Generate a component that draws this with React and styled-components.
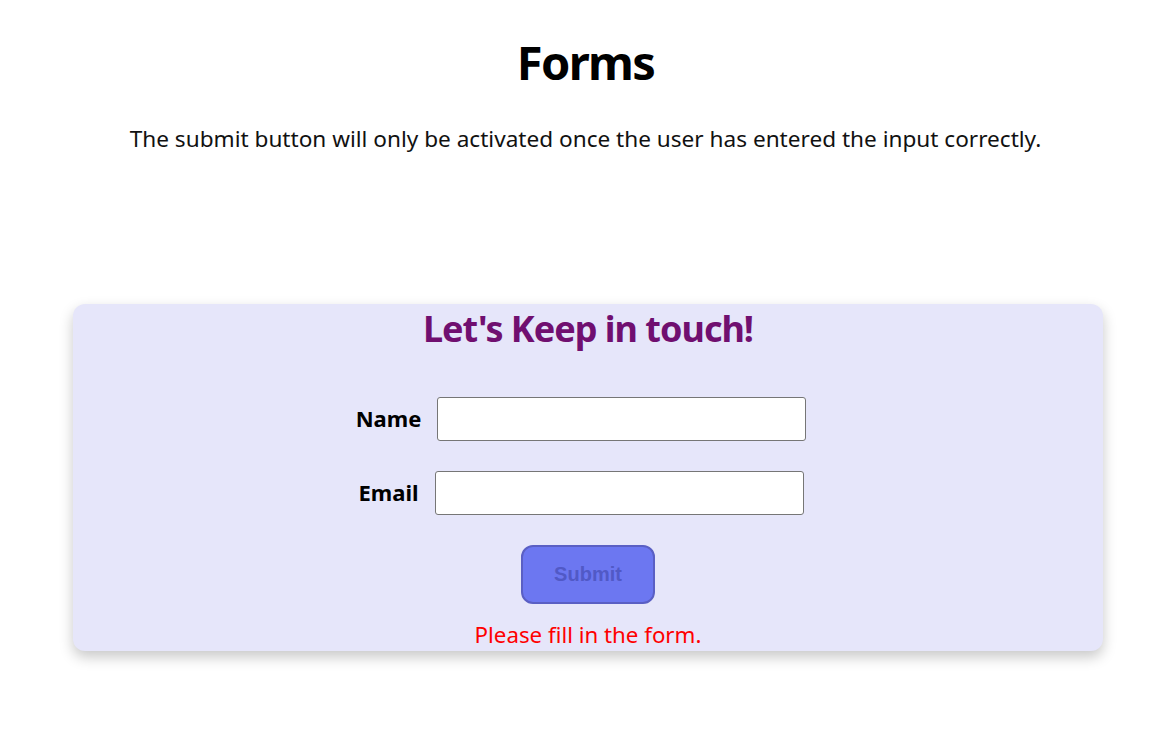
import React, { useState } from "react";
import styled, { createGlobalStyle } from "styled-components";

const GlobalStyle = createGlobalStyle`
  html, body {
    margin: 0;
    padding: 0;
    background: #ffffff;
  }
  body {
    margin: 8px;
    font-family: "Noto Sans", "Open Sans", sans-serif;
    color: #000000;
  }
  * { box-sizing: border-box; }
`;

const Page = styled.main`
  display: flex;
  flex-direction: column;
  align-items: stretch;
  padding-top: 22px;
  padding-bottom: 40px;
`;

const Heading = styled.h1`
  margin: 0;
  text-align: center;
  font-size: 47px;
  line-height: 64px;
  font-weight: 700;
  letter-spacing: -1.6px;
`;

const Intro = styled.p`
  margin: 30px 0 0;
  text-align: center;
  font-size: 22.6px;
  line-height: 30px;
  color: #111111;
`;

const Card = styled.section`
  margin: 150px 60px 0 65px;
  background: lavender;
  border-radius: 12px;
  box-shadow: 0 6px 14px rgba(0, 0, 0, 0.22);
  display: flex;
  flex-direction: column;
  align-items: center;
  padding: 1px 0 2px;
`;

const CardTitle = styled.h2`
  margin: 0;
  font-size: 36px;
  line-height: 48px;
  font-weight: 700;
  letter-spacing: -1px;
  color: #700f70;
`;

const Form = styled.form`
  display: flex;
  flex-direction: column;
  align-items: center;
  gap: 30px;
  margin-top: 44px;
`;

const Row = styled.div`
  display: flex;
  align-items: center;
  gap: 16px;
  padding-right: 14px;
`;

const Label = styled.label`
  font-size: 22px;
  font-weight: 700;
  color: #000000;
  margin-bottom: 3px;
`;

const Input = styled.input`
  width: 369px;
  height: 44px;
  border: 1px solid #767676;
  border-radius: 3px;
  background: #ffffff;
  padding: 0 8px;
  font-size: 18px;
  font-family: inherit;
  outline: none;
`;

const SubmitButton = styled.button`
  width: 134px;
  height: 59px;
  background: #6c77f1;
  border: 2px solid #5a5fc4;
  border-radius: 12px;
  font-family: "Liberation Sans", Arial, sans-serif;
  font-size: 20px;
  font-weight: 700;
  color: #5159c6;
  cursor: ${(p) => (p.disabled ? "default" : "pointer")};
`;

const ErrorText = styled.p`
  margin: -14px 0 0;
  font-size: 22.3px;
  line-height: 29px;
  color: #ff0000;
`;

export default function App() {
  const [name, setName] = useState("");
  const [email, setEmail] = useState("");
  const valid = name.trim() !== "" && /\S+@\S+\.\S+/.test(email);

  return (
    <>
      <GlobalStyle />
      <Page>
        <Heading>Forms</Heading>
        <Intro>
          The submit button will only be activated once the user has entered the input correctly.
        </Intro>
        <Card>
          <CardTitle>Let's Keep in touch!</CardTitle>
          <Form onSubmit={(e) => e.preventDefault()}>
            <Row>
              <Label htmlFor="name">Name</Label>
              <Input id="name" value={name} onChange={(e) => setName(e.target.value)} />
            </Row>
            <Row>
              <Label htmlFor="email">Email</Label>
              <Input id="email" value={email} onChange={(e) => setEmail(e.target.value)} />
            </Row>
            <SubmitButton type="submit" disabled={!valid}>
              Submit
            </SubmitButton>
            {!valid && <ErrorText>Please fill in the form.</ErrorText>}
          </Form>
        </Card>
      </Page>
    </>
  );
}
